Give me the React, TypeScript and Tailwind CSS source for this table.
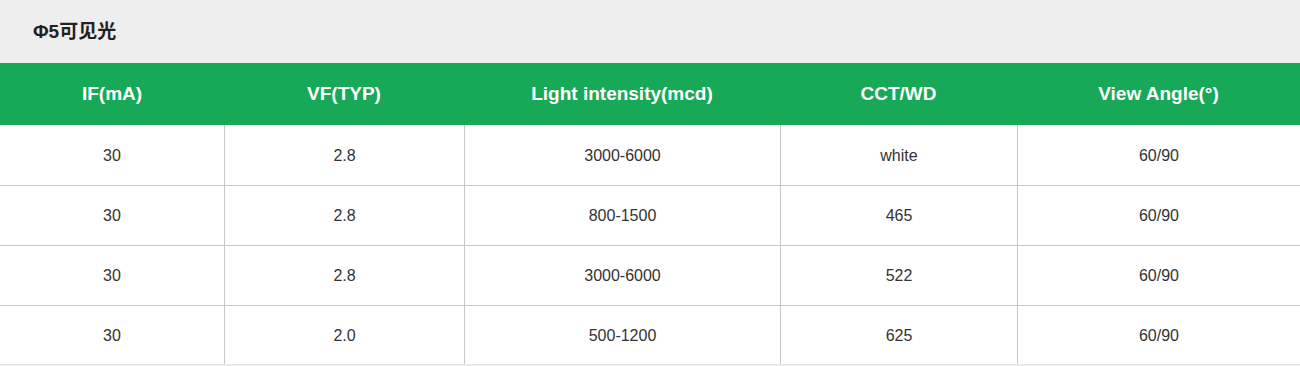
const headers = ["IF(mA)", "VF(TYP)", "Light intensity(mcd)", "CCT/WD", "View Angle(°)"]

const rows = [
    ["30", "2.8", "3000-6000", "white", "60/90"],
    ["30", "2.8", "800-1500", "465", "60/90"],
    ["30", "2.8", "3000-6000", "522", "60/90"],
    ["30", "2.0", "500-1200", "625", "60/90"],
]

const cols = "grid grid-cols-[224px_240px_316px_237px_1fr]"

export default function App() {
    return (
        <div className="w-[1300px] h-[366px] bg-[#eeeeee] font-['Liberation_Sans','Noto_Sans_CJK_SC',sans-serif]">
            <div className="h-[63px] flex items-center pl-[33px] pt-[2px]">
                <h3 className="text-[19px] font-bold text-[#222]">Φ5可见光</h3>
            </div>
            <div className={`${cols} h-[62px] bg-[#17a957] text-white text-[19px] font-bold`}>
                {headers.map((h) => (
                    <div key={h} className="flex items-center justify-center">{h}</div>
                ))}
            </div>
            <div className="bg-white">
                {rows.map((r, i) => {
                    const last = i === rows.length - 1
                    return (
                        <div key={i} className={`${cols} border-b ${i === 0 ? "h-[61px]" : last ? "h-[59px] border-[#e3e3e3]" : "h-[60px]"} ${last ? "" : "border-[#c8c8c8]"}`}>
                            {r.map((c, j) => (
                                <div key={j} className={`flex items-center justify-center pt-[1px] text-[16px] text-[#333] ${j > 0 ? "border-l border-[#c8c8c8]" : ""}`}>{c}</div>
                            ))}
                        </div>
                    )
                })}
            </div>
        </div>
    )
}
